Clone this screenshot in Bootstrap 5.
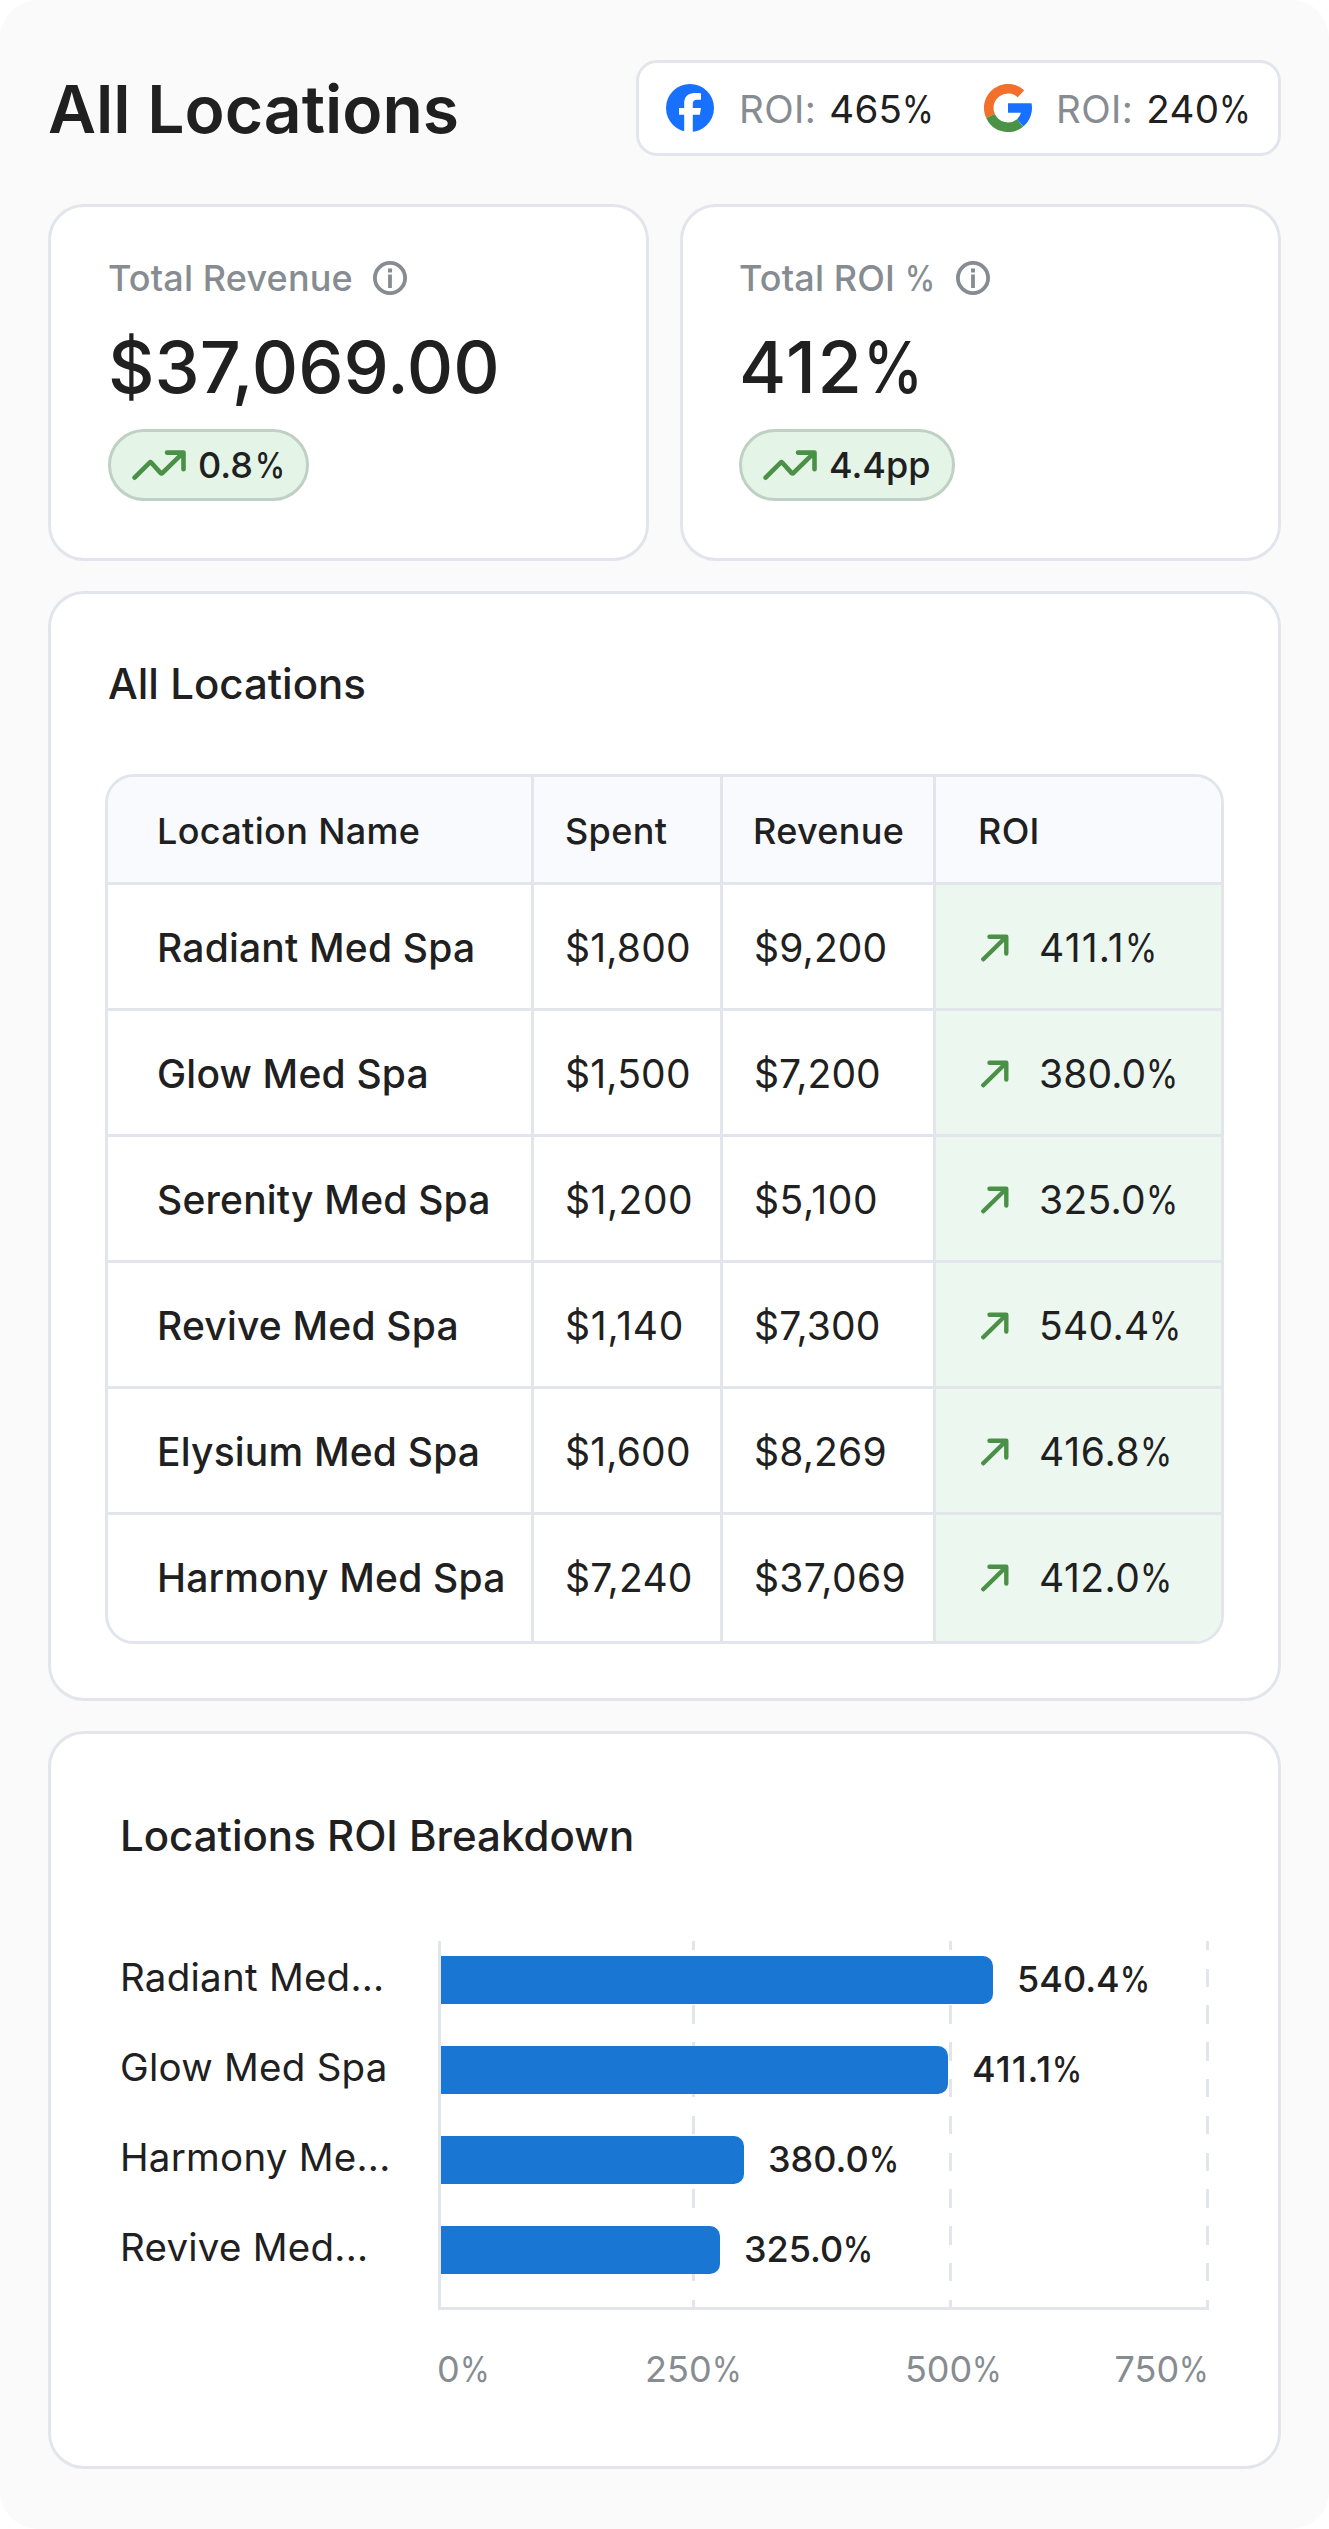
<!DOCTYPE html>
<html lang="en">
<head>
<meta charset="utf-8">
<meta name="viewport" content="width=device-width, initial-scale=1">
<title>All Locations</title>
<link href="https://cdn.jsdelivr.net/npm/bootstrap@5.3.0/dist/css/bootstrap.min.css" rel="stylesheet">
<style>
:root{--line:#e2e5ec;--ink:#202020;--muted:#868c91}
body{font-family:Inter,"Liberation Sans",sans-serif;color:var(--ink);background:#fff;font-size:36px;line-height:48px}
.page{min-height:2529px;background:#fafafa;border-radius:38px;padding:60px 48px}
.topbar{height:96px;margin-bottom:48px}
.page-title{font-size:66px;line-height:80px;font-weight:600;padding-top:2px}
.channels{height:96px;width:645px;border:3px solid var(--line);border-radius:21px;padding:1px 0 0 27px;font-size:38.5px;background:#fff}
.channels svg{width:48px;height:48px;margin-top:-1px}
.channels .muted{letter-spacing:.4px;margin-left:25px}
.channel-val{margin-left:13px;letter-spacing:.3px}
.google-icon{margin-left:49px}
.channels .google-icon+.muted{margin-left:24px}
.muted{color:var(--muted)}
.fw-mid{font-weight:500}
.pct{display:inline-block;transform:scaleX(.84);transform-origin:0 50%;margin-right:-.14em}
.panel{background:#fff;border:3px solid var(--line);border-radius:36px}
.stats{display:grid;grid-template-columns:601px 601px;gap:31px;margin-bottom:30px}
.stat{height:357px;padding:47px 57px}
.stat+.stat{padding-left:56px}
.stat-label{letter-spacing:.15px}
.info-icon{width:34px;height:34px;margin-left:20px}
.stat-value{font-size:72px;line-height:84px;font-weight:500;margin:23px 0 20px}
.stat-value.wide{letter-spacing:1.6px}
.trend{height:72px;border:3px solid #bfd0c5;background:#e4f4e7;border-radius:36px;font-weight:500;padding:0 22px 0 21px}
.trend svg{width:55px;height:34px;margin-right:11px}
.trend .pct{margin-left:2px;margin-right:-.2em}
.locations{height:1110px;padding:66px 54px 0;margin-bottom:30px}
.panel-title{font-size:42px;line-height:48px;font-weight:500}
.locations .panel-title{margin:0 0 66px 3px}
.breakdown .panel-title{margin:0 0 81px 1px}
.loc-frame{border:3px solid var(--line);border-radius:29px;overflow:hidden}
.loc-table{table-layout:fixed;width:100%;margin:0;border-collapse:separate;border-spacing:0}
.loc-table th,.loc-table td{padding:2px 0 0 31px;border:0 solid var(--line);border-bottom-width:3px;border-right-width:3px;white-space:nowrap;vertical-align:middle}
.loc-table tr>:first-child{padding-left:49px;width:426px}
.loc-table tr>:nth-child(2){width:189px}
.loc-table tr>:nth-child(3){width:213px}
.loc-table th:nth-child(3){padding-left:30px}
.loc-table tr>:last-child{border-right:0}
.loc-table th{height:108px;font-weight:500;background:#f9fafd;letter-spacing:.35px}
.loc-table th:last-child{padding-left:42px}
.loc-table td{height:126px;font-size:39px;letter-spacing:.25px}
.loc-table tbody tr:last-child td{border-bottom:0;padding-bottom:2px}
.loc-table td:first-child{letter-spacing:.2px}
.loc-table td:last-child{background:#ecf7f0;padding-left:45px}
.arrow{width:28px;height:28px;margin-right:30px}
.breakdown{height:738px;padding:78px 69px 0 68px}
.chart-labels{width:319px;font-size:38.5px;padding:12px 0 0 1px;gap:42px;letter-spacing:.25px}
.plot{width:771px;height:369px;padding:15px 0 0 3px;gap:42px;border-bottom:3px solid var(--line);
background:linear-gradient(var(--line),var(--line)) 0 0/3px 100% no-repeat,
repeating-linear-gradient(transparent 0 9.2px,#fff 9.2px 27.6px,transparent 27.6px 36.8px),
linear-gradient(90deg,transparent 254px,var(--line) 254px 257px,transparent 257px 511px,var(--line) 511px 514px,transparent 514px 768px,var(--line) 768px)}
.bar{height:48px;background:#1976d3;border-radius:0 10px 10px 0}
.bar-val{font-weight:500;margin:-2px 0 0 24px}
.axis{margin:35px 0 0 318px}
.axis>span{white-space:nowrap}
.axis>span:nth-child(2){margin-left:155px}
.axis>span:nth-child(3){margin-left:163px}
.axis>span:nth-child(4){margin-left:112px}
</style>
</head>
<body>
<svg class="d-none">
<symbol id="up" viewBox="0 0 28 28"><path d="M2.3 25.3 25 3M8.5 2.7H25.3V19.5" fill="none" stroke="#4a9046" stroke-width="4.4" stroke-linecap="round" stroke-linejoin="round"/></symbol>
<symbol id="trend" viewBox="0 0 55 34"><path d="M2.6 29.7 17.4 14.8Q18.400 13.800 19.400 14.800L28.500 24.900Q29.500 25.900 30.500 24.900L51 4.800M35 4.6H51.500V21.200" fill="none" stroke="#4a9046" stroke-width="4.6" stroke-linecap="round" stroke-linejoin="round"/></symbol>
<symbol id="info" viewBox="0 0 34 34"><circle cx="17" cy="17" r="15.100" fill="none" stroke="#868c91" stroke-width="3.800"/><path d="M15 7.500h4v4h-4zM15.100 13.500h3.800V27h-3.800z" fill="#868c91"/></symbol>
</svg>
<main class="page">
<header class="topbar d-flex justify-content-between align-items-center">
<h1 class="page-title m-0">All Locations</h1>
<div class="channels d-flex align-items-center">
<svg viewBox="0 0 48 48"><circle cx="24" cy="24" r="24" fill="#1870ff"/><path d="M18.200 48V30.700H13V24h5.200v-4.500C18.200 12.500 22 9 29 9c2.300 0 4.500 0 6 .3v6.400h-3.300c-3.600 0-4.900 1.500-4.900 4.300V24H35l-1.200 6.700h-7V48z" fill="#fff"/></svg>
<span class="muted">ROI:</span>
<span class="channel-val">465<span class="pct">%</span></span>
<svg class="google-icon" viewBox="0 0 48 48"><g fill="none" stroke-width="9.600"><path d="M37 9.800A19.200 19.200 0 0 0 6.500 31.900" stroke="#f26f2c"/><path d="M6.500 31.900A19.200 19.200 0 0 0 36.100 38.900" stroke="#4a9246"/></g><path d="M24 19.300H47.500A24 24 0 0 1 39.300 42.600L33 35.200A14.400 14.400 0 0 0 37 28.700H24z" fill="#1870ff"/></svg>
<span class="muted">ROI:</span>
<span class="channel-val">240<span class="pct">%</span></span>
</div>
</header>
<section class="stats">
<div class="panel stat">
<div class="stat-label d-flex align-items-center muted fw-mid"><span>Total Revenue</span><svg class="info-icon"><use href="#info"/></svg></div>
<div class="stat-value">$37,069.00</div>
<div class="trend d-inline-flex align-items-center"><svg><use href="#trend"/></svg><span>0.8<span class="pct">%</span></span></div>
</div>
<div class="panel stat">
<div class="stat-label d-flex align-items-center muted fw-mid"><span>Total ROI <span class="pct">%</span></span><svg class="info-icon"><use href="#info"/></svg></div>
<div class="stat-value wide">412<span class="pct">%</span></div>
<div class="trend d-inline-flex align-items-center"><svg><use href="#trend"/></svg><span>4.4pp</span></div>
</div>
</section>
<section class="panel locations">
<h2 class="panel-title">All Locations</h2>
<div class="loc-frame">
<table class="loc-table">
<thead><tr><th>Location Name</th><th>Spent</th><th>Revenue</th><th>ROI</th></tr></thead>
<tbody id="rows"></tbody>
</table>
</div>
</section>
<section class="panel breakdown">
<h2 class="panel-title">Locations ROI Breakdown</h2>
<div class="d-flex">
<div class="chart-labels d-flex flex-column"><div>Radiant Med...</div><div>Glow Med Spa</div><div>Harmony Me...</div><div>Revive Med...</div></div>
<div class="plot d-flex flex-column" id="plot"></div>
</div>
<div class="axis d-flex muted"><span>0<span class="pct">%</span></span><span>250<span class="pct">%</span></span><span>500<span class="pct">%</span></span><span>750<span class="pct">%</span></span></div>
</section>
</main>
<script>
// name, spent, revenue, ROI, then the tracking (px) of spent, revenue and ROI
const locations=[
["Radiant Med Spa","$1,800","$9,200","411.1",.2,.15,1.2],
["Glow Med Spa","$1,500","$7,200","380.0",.2,.05,0.1],
["Serenity Med Spa","$1,200","$5,100","325.0",.5,.6,.3],
["Revive Med Spa","$1,140","$7,300","540.4",.8,.15,.3],
["Elysium Med Spa","$1,600","$8,269","416.8",.2,.2,.75],
["Harmony Med Spa","$7,240","$37,069","412.0",.2,.35,.5]];
document.getElementById("rows").innerHTML=locations.map(([name,spent,rev,roi,a,b,c])=>`<tr><td class="fw-mid">${name}</td><td style="letter-spacing:${a}px">${spent}</td><td style="letter-spacing:${b}px">${rev}</td><td><div class="d-flex align-items-center"><svg class="arrow"><use href="#up"/></svg><span style="letter-spacing:${c}px">${roi}<span class="pct">%</span></span></div></td></tr>`).join("");
// bar width (px), value, tracking (px)
const bars=[[552,"540.4",0],[507,"411.1",1],[303,"380.0",0],[279,"325.0",0]];
document.getElementById("plot").innerHTML=bars.map(([w,v,t])=>`<div class="d-flex align-items-center"><div class="bar" style="width:${w}px"></div><span class="bar-val" style="letter-spacing:${t}px">${v}<span class="pct">%</span></span></div>`).join("");
</script>
<script src="https://cdn.jsdelivr.net/npm/bootstrap@5.3.0/dist/js/bootstrap.bundle.min.js"></script>
</body>
</html>
